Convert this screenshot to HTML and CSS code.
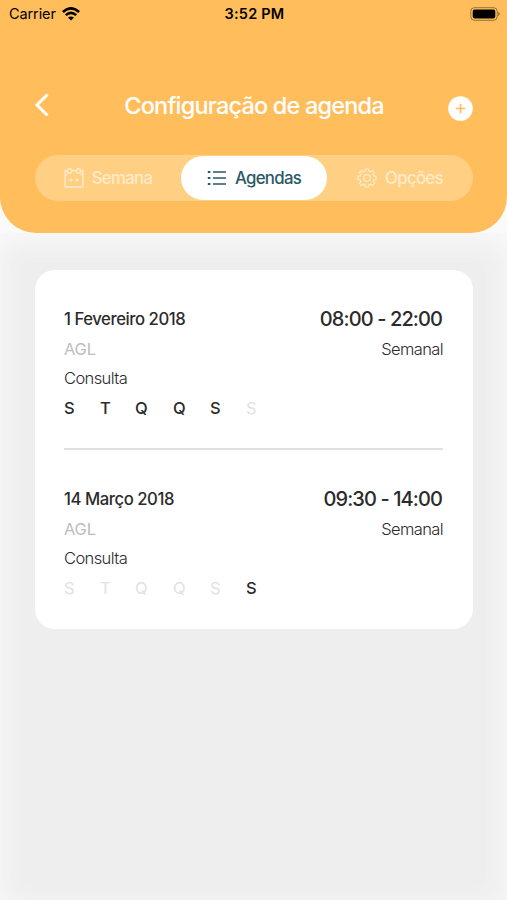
FILE: index.html
```
<!DOCTYPE html>
<html lang="pt">

<head>
  <meta charset="UTF-8">
  <meta name="viewport" content="width=device-width, initial-scale=1.0">
  <title>Configuração de agenda</title>
  <link rel="stylesheet" href="styles.css">
</head>

<body>
  <header class="header">
    <div class="status-bar">
      <div class="carrier">
        <span>Carrier</span>
        <svg class="wifi" width="18" height="14" viewBox="0 0 18 14" fill="none" stroke="#000" stroke-width="2.6">
          <path d="M0.9 5 Q9 -2.4 17.1 5" />
          <path d="M3.8 8.1 Q9 3.5 14.2 8.1" />
          <path d="M9 13.6 L6 10.6 Q9 8.2 12 10.6 Z" fill="#000" stroke="none" />
        </svg>
      </div>
      <div class="clock">3:52 PM</div>
      <svg class="battery" width="30" height="14" viewBox="0 0 30 14">
        <rect x="0.8" y="0.7" width="26.4" height="12.6" rx="3.6" fill="none" stroke="#000" stroke-opacity="0.4" />
        <rect x="2.7" y="2.6" width="22.6" height="8.8" rx="1.8" />
        <path d="M28.3 4.8 Q31 7 28.3 9.2 Z" fill-opacity="0.5" />
      </svg>
    </div>

    <div class="title-bar">
      <svg class="back" width="15" height="24" viewBox="0 0 15 24" fill="none" stroke="#fff" stroke-width="3">
        <path d="M13.5 1.5 L3 12 L13.5 22.5" />
      </svg>
      <h1>Configuração de agenda</h1>
      <svg class="add" width="25" height="25" viewBox="0 0 25 25">
        <circle cx="12.5" cy="12.5" r="12.3" fill="#fff" />
        <path d="M12.5 7.7 V17.3 M7.7 12.5 H17.3" stroke="#ffbe5b" stroke-width="1.7" />
      </svg>
    </div>

    <nav class="tabs">
      <a class="tab" href="#">
        <svg width="20" height="20" viewBox="0 0 20 20" fill="none" stroke="currentColor" stroke-width="1.4">
          <path d="M3 2.7 H1.7 Q1 2.7 1 3.4 V18.3 Q1 19 1.7 19 H18.3 Q19 19 19 18.3 V3.4 Q19 2.7 18.3 2.7 H17 M7.2 2.7 H12.8 M1 6.6 H3.5 M16.5 6.6 H19" />
          <circle cx="5.4" cy="3" r="2.2" />
          <circle cx="14.6" cy="3" r="2.2" />
          <path d="M5.4 12 H8.6 M7 10.4 V13.6 M11.4 12 H14.6 M13 10.4 V13.6" />
        </svg>
        <span>Semana</span>
      </a>
      <a class="tab active" href="#">
        <svg width="20" height="16" viewBox="0 0 20 16" fill="none" stroke="currentColor" stroke-width="1.6">
          <path d="M6 2 H19 M6 8 H19 M6 14 H19" />
          <path d="M0.8 2 H3.4 M0.8 8 H3.4 M0.8 14 H3.4" stroke-width="2.2" />
        </svg>
        <span>Agendas</span>
      </a>
      <a class="tab" href="#">
        <svg width="20" height="20" viewBox="0 0 20 20" fill="none" stroke="currentColor" stroke-width="1.2" stroke-linejoin="round">
          <path d="M8.4 1 H11.6 L12.1 3.3 L13.4 3.9 L15.4 2.5 L17.5 4.6 L16.1 6.6 L16.7 7.9 L19 8.4 V11.6 L16.7 12.1 L16.1 13.4 L17.5 15.4 L15.4 17.5 L13.4 16.1 L12.1 16.7 L11.6 19 H8.4 L7.9 16.7 L6.6 16.1 L4.6 17.5 L2.5 15.4 L3.9 13.4 L3.3 12.1 L1 11.6 V8.4 L3.3 7.9 L3.9 6.6 L2.5 4.6 L4.6 2.5 L6.6 3.9 L7.9 3.3 Z" />
          <circle cx="10" cy="10" r="3.4" />
        </svg>
        <span>Opções</span>
      </a>
    </nav>
  </header>

  <main class="content">
    <div class="card">
      <section class="schedule">
        <div class="row main-row">
          <span class="date">1 Fevereiro 2018</span>
          <span class="hours">08:00 - 22:00</span>
        </div>
        <div class="row">
          <span class="place">AGL</span>
          <span class="period">Semanal</span>
        </div>
        <div class="row type">Consulta</div>
        <div class="days">
          <span class="on">S</span>
          <span class="on">T</span>
          <span class="on">Q</span>
          <span class="on">Q</span>
          <span class="on">S</span>
          <span>S</span>
        </div>
      </section>
      <section class="schedule">
        <div class="row main-row">
          <span class="date">14 Março 2018</span>
          <span class="hours">09:30 - 14:00</span>
        </div>
        <div class="row">
          <span class="place">AGL</span>
          <span class="period">Semanal</span>
        </div>
        <div class="row type">Consulta</div>
        <div class="days">
          <span>S</span>
          <span>T</span>
          <span>Q</span>
          <span>Q</span>
          <span>S</span>
          <span class="on">S</span>
        </div>
      </section>
    </div>
  </main>
</body>

</html>
```
FILE: styles.css
```
* {
  box-sizing: border-box;
}

body {
  margin: 0;
  height: 900px;
  display: flex;
  flex-direction: column;
  overflow: hidden;
  font-family: Inter, "Liberation Sans", sans-serif;
  background-color: #fafafa;
  color: #2b2b2b;
}

.header {
  height: 233px;
  flex-shrink: 0;
  background-color: #ffbe5b;
  border-radius: 0 0 36px 36px;
}

.status-bar {
  height: 27px;
  display: grid;
  grid-template-columns: 1fr auto 1fr;
  align-items: center;
  padding: 0 7px 0 9px;
  color: #000000;
}

.carrier {
  display: flex;
  align-items: center;
  gap: 6px;
  font-size: 14.5px;
  letter-spacing: -0.1px;
}

.clock {
  font-size: 14.5px;
  font-weight: 600;
  letter-spacing: 0.2px;
}

.battery {
  justify-self: end;
}

.title-bar {
  display: flex;
  align-items: center;
  justify-content: space-between;
  height: 50px;
  margin: 53px 34px 0;
  color: #ffffff;
}

.back {
  margin-bottom: 1px;
}

.add {
  margin-top: 6px;
}

h1 {
  margin: 0 0 0 11px;
  font-size: 23.5px;
  font-weight: 500;
  letter-spacing: -0.82px;
}

.tabs {
  display: flex;
  height: 46px;
  margin: 25px 34px 0 35px;
  border-radius: 23px;
  background-color: #ffd083;
}

.tab {
  flex: 1;
  display: flex;
  align-items: center;
  justify-content: center;
  gap: 8px;
  color: #ffebc9;
  font-size: 16.8px;
  font-weight: 500;
  letter-spacing: -0.7px;
  text-decoration: none;
}

.tab span {
  margin-bottom: 1px;
}

.active {
  margin: 1px 0;
  border-radius: 22px;
  background-color: #ffffff;
  color: #2a5866;
}

.content {
  flex: 1;
  padding: 37px 34px 0 35px;
  background-color: #eeeeee;
  box-shadow: inset 0 8px 28px #fafafa;
}

.card {
  height: 359px;
  padding: 0 30px 0 29px;
  border-radius: 20px;
  background-color: #ffffff;
}

.schedule {
  height: 180px;
  padding-top: 33px;
}

.schedule:first-child {
  border-bottom: 2px solid #e0e0e0;
}

.row {
  height: 29px;
  display: flex;
  justify-content: space-between;
  align-items: center;
  font-size: 16.5px;
  letter-spacing: -0.6px;
}

.main-row {
  height: 31px;
}

.date {
  font-weight: 500;
  font-size: 16.7px;
  letter-spacing: -0.45px;
}

.hours {
  margin-right: 1px;
  font-size: 20px;
  font-weight: 500;
  letter-spacing: -0.9px;
}

.place {
  color: #bdbdbd;
  letter-spacing: -0.2px;
}

.period,
.type {
  font-weight: 300;
}

.days {
  display: grid;
  grid-template-columns: 36px 35px 38px 37px 36px auto;
  height: 31px;
  align-items: center;
  font-size: 16.5px;
  color: #e2e2e2;
}

.days .on {
  color: #2b2b2b;
  font-weight: 500;
}
```
